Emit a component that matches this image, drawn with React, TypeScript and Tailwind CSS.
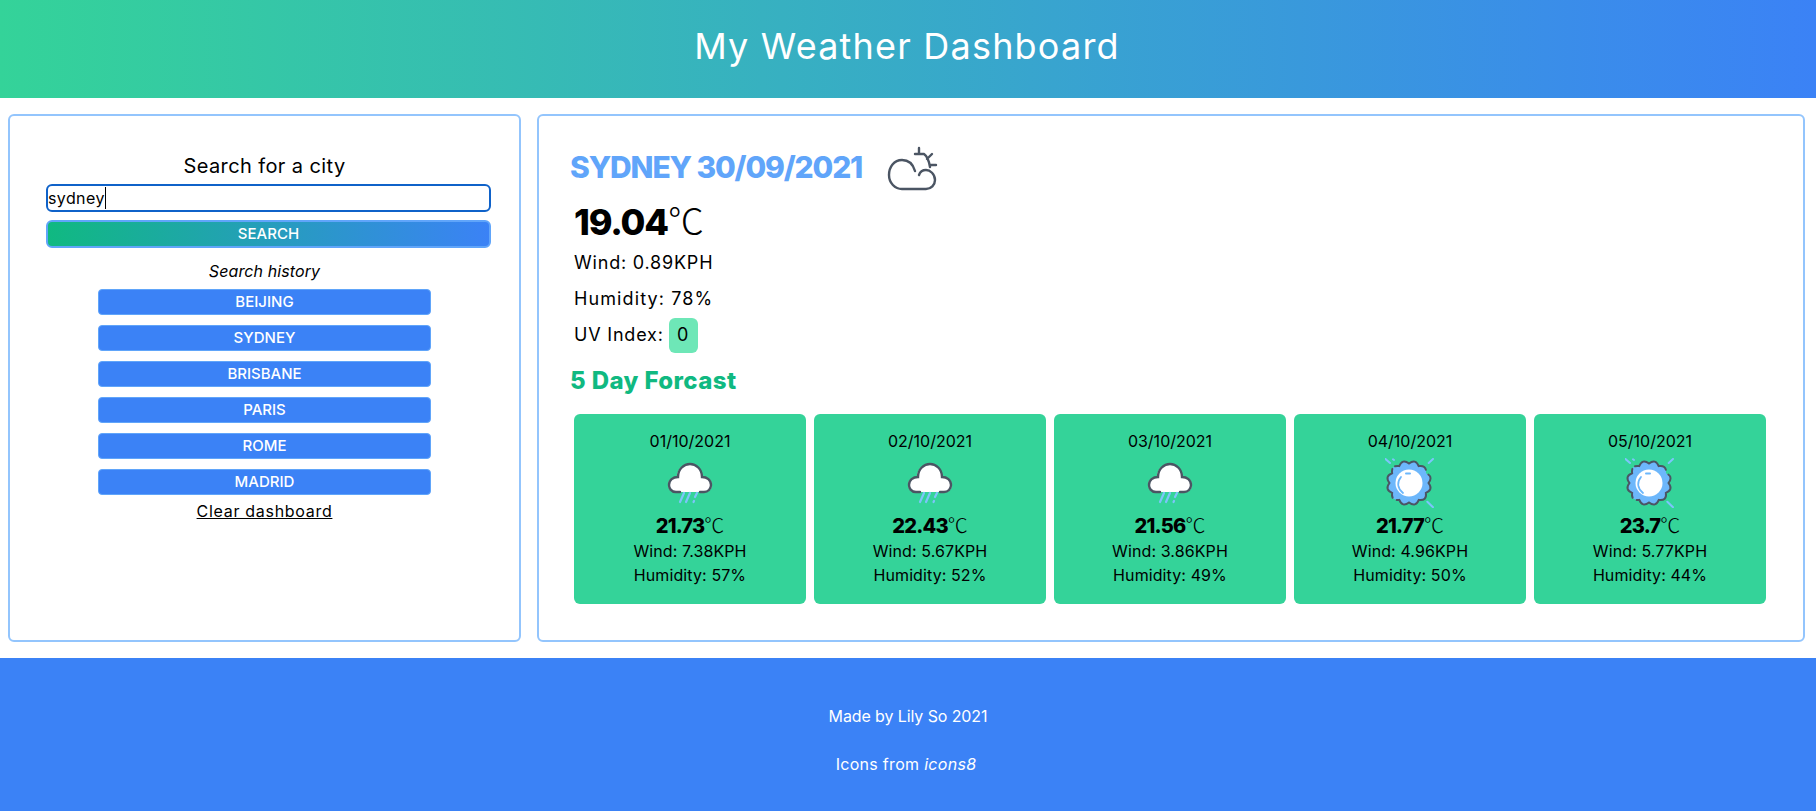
import React from "react";

const font = { fontFamily: "Inter, 'Noto Sans', sans-serif" };

const history = ["BEIJING", "SYDNEY", "BRISBANE", "PARIS", "ROME", "MADRID"];

const forecast = [
  { date: "01/10/2021", temp: "21.73", wind: "7.38", humidity: "57", icon: "rain" },
  { date: "02/10/2021", temp: "22.43", wind: "5.67", humidity: "52", icon: "rain" },
  { date: "03/10/2021", temp: "21.56", wind: "3.86", humidity: "49", icon: "rain" },
  { date: "04/10/2021", temp: "21.77", wind: "4.96", humidity: "50", icon: "sun" },
  { date: "05/10/2021", temp: "23.7", wind: "5.77", humidity: "44", icon: "sun" },
];

// wavy edge of the sun badge: 12 lobes around the centre
const lobes = 12;
const pt = (r: number, a: number) => `${(24 + r * Math.cos(a)).toFixed(1)} ${(25 + r * Math.sin(a)).toFixed(1)}`;
let sunEdge = `M${pt(19.5, 0)}`;
for (let i = 0; i < lobes; i++) {
  const step = (Math.PI * 2) / lobes;
  sunEdge += ` Q${pt(25.5, (i + 0.5) * step)} ${pt(19.5, (i + 1) * step)}`;
}
sunEdge += " Z";

const PartlyCloudy = () => (
  <svg width="52" height="46" viewBox="16 6 52 46" fill="none" stroke="#4b5563" strokeWidth="2.4" strokeLinecap="round" strokeLinejoin="round" className="shrink-0">
    <path d="M45 31 C43 24 38 20 32 20 C24 20 19 27 19 35 C19 43 25 49 32 49 L56 49 C61 49 65 45 65 40 C65 34 60 30 56 30 C52 30 50 32 49 35" />
    <path d="M49 8 L49 14 M45 14 L54 14 C57 16 59 21 60 27 M62 14 L57 19 M60 25 L66 25" />
  </svg>
);

const RainCloud = () => (
  <svg width="46" height="42" viewBox="0 0 46 42">
    <path d="M14 30 L8 30 C3 30 1 26 1 23 C1 18 5 15 10 15 C10 7 16 2 23 2 C30 2 35 7 36 15 C41 15 45 18 45 23 C45 27 42 30 38 30 Z" fill="#ffffff" />
    <path d="M13 30 L9 30 C4 30 2 26 2 23 C2 18 6 15 11 15 C11 7 17 2 23 2 C29 2 35 7 35 15 C40 15 44 18 44 23 C44 27 41 30 37 30 L33 30" fill="none" stroke="#4b5563" strokeWidth="2.4" strokeLinecap="round" />
    <path d="M17 31 L13 40 M23 31 L19 40 M30 31 L28 35 M27 39 L26.5 40" stroke="#7dc4fb" strokeWidth="2.2" strokeLinecap="round" fill="none" />
  </svg>
);

const SunBurst = () => (
  <svg width="50" height="50" viewBox="0 0 50 50">
    <path d={sunEdge} fill="#6db7fb" />
    <path d={sunEdge} fill="none" stroke="#4b5563" strokeWidth="2" strokeLinecap="round" strokeDasharray="52 5 34 4 38 6" />
    <circle cx="24" cy="25" r="13.5" fill="#ffffff" />
    <path d="M16 19 C12 24 12 30 18 35" fill="none" stroke="#6db7fb" strokeWidth="1.8" strokeLinecap="round" />
    <path d="M21 15.5 L25 15.5" stroke="#6db7fb" strokeWidth="2" strokeLinecap="round" />
    <path d="M0.5 1 L5 5 M8 1.3 L9 2 M48 1 L43.7 5 M42.3 43.7 L48 49.3" stroke="#7dc4fb" strokeWidth="2" strokeLinecap="round" />
  </svg>
);

const Celsius = () => <span className="font-['Noto_Sans_CJK_SC'] font-light tracking-normal">℃</span>;

const App = () => {
  return (
    <div className="h-[811px] overflow-hidden flex flex-col bg-white text-black" style={font}>
      <header className="h-[98px] flex items-center justify-center pb-[7px] pr-[2px] bg-[linear-gradient(to_right,#34d399,#3b82f6)]">
        <h1 className="text-4xl leading-10 text-white tracking-[1.2px]">My Weather Dashboard</h1>
      </header>

      <main className="flex gap-4 pl-2 pr-[11px] py-4 h-[560px]">
        <section className="w-[513px] shrink-0 border-2 border-[#93c5fd] rounded-md pt-[36px]">
          <div className="flex flex-col items-center">
            <h2 className="text-xl leading-7 tracking-[0.4px]">Search for a city</h2>
            <div className="relative w-[445px] ml-2 mt-1">
              <input
                readOnly
                value="sydney"
                className="w-full h-[28px] border-2 border-[#0f62c9] rounded-md text-base outline-none bg-white tracking-[0.4px]"
              />
              <span className="absolute left-[59px] top-[3px] h-[22px] w-px bg-black" />
            </div>
            <button className="w-[445px] h-[28px] ml-2 mt-2 rounded-md border-2 border-[#60a5fa] bg-[linear-gradient(to_right,#10b981,#3b82f6)] text-white text-[15px] font-medium">
              SEARCH
            </button>
            <p className="mt-[11px] text-base leading-6 italic tracking-[0.1px]">Search history</p>
            <div className="flex flex-col gap-[10px] mt-[6px]">
              {history.map((city) => (
                <button key={city} className="w-[333px] h-[26px] rounded-[4px] border border-[#60a5fa] bg-[#3b82f6] text-white text-[15px] font-medium leading-6">
                  {city}
                </button>
              ))}
            </div>
            <a className="mt-1 text-base leading-6 underline tracking-[0.7px]">Clear dashboard</a>
          </div>
        </section>

        <section className="flex-1 border-2 border-[#93c5fd] rounded-md pl-[31px] pr-[36px] pt-[30px]">
          <div className="flex items-start gap-6 h-[44px]">
            <h2 className="mt-[3px] text-3xl font-extrabold text-[#60a5fa] uppercase leading-9 tracking-[-1.15px]">Sydney 30/09/2021</h2>
            <PartlyCloudy />
          </div>
          <div className="pl-[4px]">
            <p className="text-4xl mt-[9px] h-10 leading-10">
              <b className="font-extrabold tracking-[-1.2px]">19.04</b>
              <Celsius />
            </p>
            <p className="text-lg leading-7 mt-[10px] tracking-[0.8px]">Wind: 0.89KPH</p>
            <p className="text-lg leading-7 mt-2 tracking-[1.1px]">Humidity: 78%</p>
            <p className="text-lg leading-7 mt-2 flex items-center h-[28px] tracking-[0.8px]">
              UV Index:
              <span className="ml-[5px] w-[29px] h-[35px] rounded-md bg-[#6ee7b7] flex items-center justify-center">0</span>
            </p>
          </div>
          <h3 className="mt-4 text-2xl font-extrabold leading-8 text-[#10b981] tracking-[0.4px]">5 Day Forcast</h3>
          <div className="flex gap-2 mt-[17px] pl-[4px]">
            {forecast.map((d) => (
              <div key={d.date} className="w-[232px] h-[190px] rounded-md bg-[#34d399] flex flex-col items-center pt-[15px]">
                <p className="text-base leading-6">{d.date}</p>
                <div className="h-[60px] flex items-center justify-center">
                  {d.icon === "rain" ? <RainCloud /> : <SunBurst />}
                </div>
                <p className="text-xl h-6 leading-6">
                  <b className="font-extrabold tracking-[-0.8px]">{d.temp}</b>
                  <Celsius />
                </p>
                <p className="text-base leading-6 mt-[2px] tracking-[0.1px]">Wind: {d.wind}KPH</p>
                <p className="text-base leading-6 tracking-[0.1px]">Humidity: {d.humidity}%</p>
              </div>
            ))}
          </div>
        </section>
      </main>

      <footer className="h-[153px] bg-[#3b82f6] text-white text-base flex flex-col items-center pt-[46px] gap-6">
        <p className="leading-6 tracking-[-0.1px]">Made by Lily So 2021</p>
        <p className="leading-6 tracking-[0.3px] pr-1">
          Icons from <i>icons8</i>
        </p>
      </footer>
    </div>
  );
};

export default App;
